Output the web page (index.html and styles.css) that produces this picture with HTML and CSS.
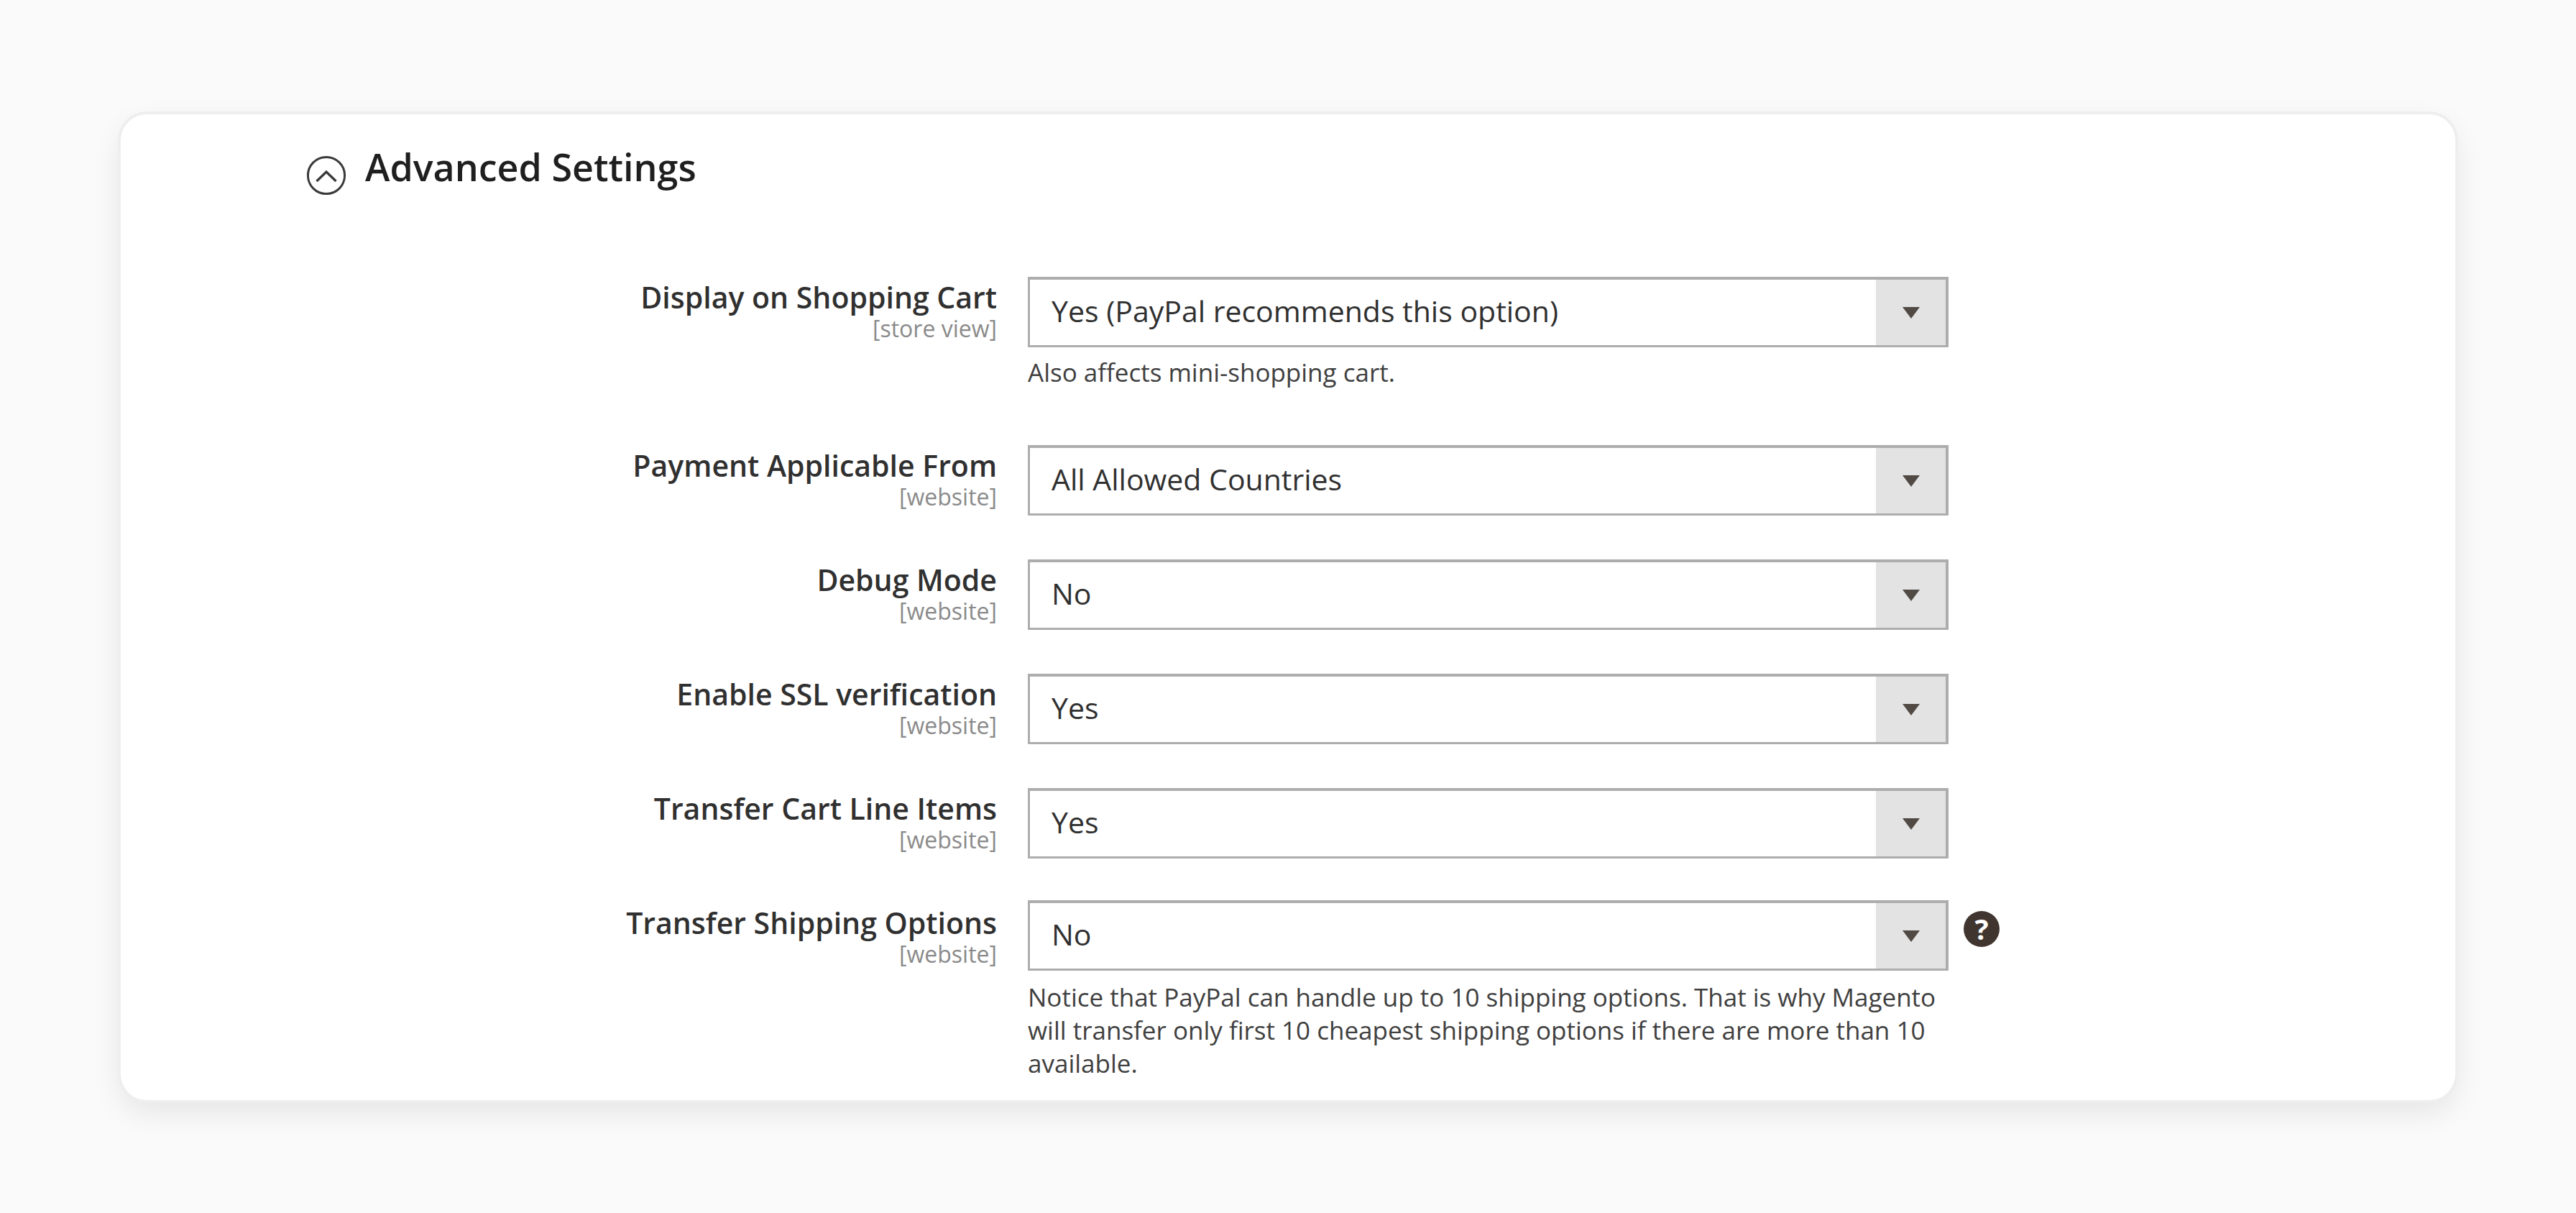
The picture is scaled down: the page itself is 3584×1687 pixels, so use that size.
FILE: index.html
```html
<!DOCTYPE html>
<html lang="en">
<head>
<meta charset="utf-8">
<title>Advanced Settings</title>
<link rel="stylesheet" href="styles.css">
</head>
<body>
<main class="card">
  <h2 class="title">
    <svg class="toggle" viewBox="0 0 56 56" aria-hidden="true">
      <circle cx="28" cy="28" r="25.6" fill="none" stroke="#3a3a3a" stroke-width="3"/>
      <path d="M14.5 36 L28 23 L41.500 36" fill="none" stroke="#3a3a3a" stroke-width="3.400"/>
    </svg>
    <span>Advanced Settings</span>
  </h2>
  <div class="form">
    <div class="row row-note">
      <div class="label"><div class="name">Display on Shopping Cart</div><div class="scope">[store view]</div></div>
      <div class="control">
        <div class="select"><span class="value">Yes (PayPal recommends this option)</span><span class="arrow"><svg viewBox="0 0 24 16" aria-hidden="true"><path d="M0 0H24L12 16Z"/></svg></span></div>
        <p class="note note-single">Also affects mini-shopping cart.</p>
      </div>
    </div>
    <div class="row">
      <div class="label"><div class="name">Payment Applicable From</div><div class="scope">[website]</div></div>
      <div class="control"><div class="select"><span class="value">All Allowed Countries</span><span class="arrow"><svg viewBox="0 0 24 16" aria-hidden="true"><path d="M0 0H24L12 16Z"/></svg></span></div></div>
    </div>
    <div class="row">
      <div class="label"><div class="name">Debug Mode</div><div class="scope">[website]</div></div>
      <div class="control"><div class="select"><span class="value">No</span><span class="arrow"><svg viewBox="0 0 24 16" aria-hidden="true"><path d="M0 0H24L12 16Z"/></svg></span></div></div>
    </div>
    <div class="row">
      <div class="label"><div class="name">Enable SSL verification</div><div class="scope">[website]</div></div>
      <div class="control"><div class="select"><span class="value">Yes</span><span class="arrow"><svg viewBox="0 0 24 16" aria-hidden="true"><path d="M0 0H24L12 16Z"/></svg></span></div></div>
    </div>
    <div class="row row-tight">
      <div class="label"><div class="name">Transfer Cart Line Items</div><div class="scope">[website]</div></div>
      <div class="control"><div class="select"><span class="value">Yes</span><span class="arrow"><svg viewBox="0 0 24 16" aria-hidden="true"><path d="M0 0H24L12 16Z"/></svg></span></div></div>
    </div>
    <div class="row row-last">
      <div class="label"><div class="name">Transfer Shipping Options</div><div class="scope">[website]</div></div>
      <div class="control">
        <div class="select"><span class="value">No</span><span class="arrow"><svg viewBox="0 0 24 16" aria-hidden="true"><path d="M0 0H24L12 16Z"/></svg></span></div>
        <p class="note">Notice that PayPal can handle up to 10 shipping options. That is why Magento will transfer only first 10 cheapest shipping options if there are more than 10 available.</p>
      </div>
      <span class="help">?</span>
    </div>
  </div>
</main>
</body>
</html>
```
FILE: styles.css
```css
* { box-sizing: border-box; }
html, body { margin: 0; height: 100%; }
body {
  background: #fafafa;
  padding: 159px 168px 0;
  font-family: "Open Sans", "Noto Sans", sans-serif;
  color: #303030;
  overflow: hidden;
}
.card {
  height: 1371px;
  background: #fff;
  border-radius: 36px;
  box-shadow: 0 0 0 4px #eeeeee, 0 16px 42px rgba(0, 0, 0, 0.09);
  padding: 52px 258px 0;
}
.title {
  display: flex;
  align-items: flex-start;
  gap: 26px;
  margin: 0;
  font-size: 52px;
  line-height: 72px;
  font-weight: 600;
  color: #1f1f1f;
}
.title span { margin-top: -15px; }
.toggle { width: 56px; height: 56px; margin-top: 5px; flex: none; }
.form { margin-top: 113px; }
.row { display: flex; align-items: flex-start; margin-bottom: 61px; }
.row-note { margin-bottom: 0; height: 234px; }
.row-tight { margin-bottom: 58px; }
.row-last { margin-bottom: 0; }
.label { width: 961px; flex: none; text-align: right; padding-top: 4px; }
.row-last .label { padding-top: 7px; }
.name { font-size: 41px; line-height: 48px; font-weight: 600; color: #303030; }
.scope { font-size: 32px; line-height: 40px; color: #8a8a8a; }
.control { width: 1281px; flex: none; margin-left: 43px; }
.select {
  display: flex;
  align-items: center;
  height: 98px;
  border: solid #adadad;
  border-width: 4px 4px 3px 3px;
  background: #fff;
}
.value { flex: 1; padding: 0 0 6px 30px; font-size: 41px; line-height: 56px; color: #303030; }
.arrow {
  width: 97px;
  align-self: stretch;
  background: #e3e3e3;
  display: flex;
  align-items: center;
  justify-content: center;
}
.arrow svg { width: 24px; height: 16px; display: block; fill: #514943; }
.note {
  margin: 14px 0 0;
  font-size: 35px;
  line-height: 46px;
  color: #404040;
}
.note-single { margin-top: 12px; }
.help {
  flex: none;
  width: 50px;
  height: 50px;
  margin: 15px 0 0 21px;
  border-radius: 50%;
  background: #41362f;
  color: #fff;
  font-size: 40px;
  line-height: 50px;
  font-weight: 700;
  text-align: center;
}
```
